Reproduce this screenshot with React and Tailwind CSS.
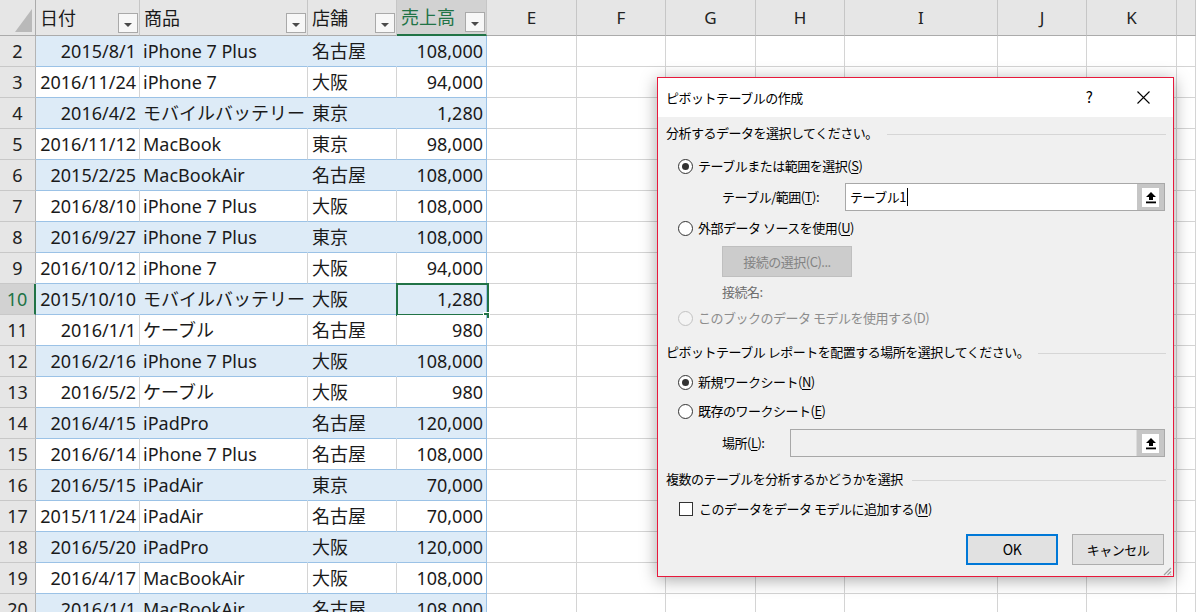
import React from "react";

const rows = [
  [2, "2015/8/1", "iPhone 7 Plus", "名古屋", "108,000"],
  [3, "2016/11/24", "iPhone 7", "大阪", "94,000"],
  [4, "2016/4/2", "モバイルバッテリー", "東京", "1,280"],
  [5, "2016/11/12", "MacBook", "東京", "98,000"],
  [6, "2015/2/25", "MacBookAir", "名古屋", "108,000"],
  [7, "2016/8/10", "iPhone 7 Plus", "大阪", "108,000"],
  [8, "2016/9/27", "iPhone 7 Plus", "東京", "108,000"],
  [9, "2016/10/12", "iPhone 7", "大阪", "94,000"],
  [10, "2015/10/10", "モバイルバッテリー", "大阪", "1,280"],
  [11, "2016/1/1", "ケーブル", "名古屋", "980"],
  [12, "2016/2/16", "iPhone 7 Plus", "大阪", "108,000"],
  [13, "2016/5/2", "ケーブル", "大阪", "980"],
  [14, "2016/4/15", "iPadPro", "名古屋", "120,000"],
  [15, "2016/6/14", "iPhone 7 Plus", "名古屋", "108,000"],
  [16, "2016/5/15", "iPadAir", "東京", "70,000"],
  [17, "2015/11/24", "iPadAir", "名古屋", "70,000"],
  [18, "2016/5/20", "iPadPro", "大阪", "120,000"],
  [19, "2016/4/17", "MacBookAir", "大阪", "108,000"],
  [20, "2016/1/1", "MacBookAir", "名古屋", "108,000"],
];

// empty columns E..L
const emptyCols = [
  ["E", "w-[90px]"],
  ["F", "w-[89px]"],
  ["G", "w-[90px]"],
  ["H", "w-[89px]"],
  ["I", "w-[153px]"],
  ["J", "w-[89px]"],
  ["K", "w-[90px]"],
  ["", "flex-1"],
];

function FilterBtn() {
  return (
    <div className="w-[20px] h-[20px] mb-[2px] shrink-0 border border-[#a9a9a9] bg-[#f7f7f7] flex items-center justify-center pt-[3px]">
      <svg width="8" height="4" viewBox="0 0 8 4">
        <path d="M0 0h8L4 4z" fill="#4a4a4a" />
      </svg>
    </div>
  );
}

function HeadCell({ w, label, active }) {
  return (
    <div
      className={`${w} h-[36px] flex items-end justify-between pl-[4px] pr-[1px] border-r border-[#c6c6c6] ${
        active ? "bg-[#d2d2d2] text-[#217346] border-b-2 border-b-[#217346]" : "bg-[#e6e6e6] border-b border-b-[#ababab]"
      }`}
    >
      <span className="leading-[26px] mb-[4px] whitespace-nowrap">{label}</span>
      <FilterBtn />
    </div>
  );
}

function HeaderRow() {
  return (
    <div className="flex h-[36px]">
      <div className="w-[36px] h-[36px] bg-[#e6e6e6] border-r border-b border-[#ababab] shrink-0">
        <svg width="35" height="35" viewBox="0 0 35 35">
          <polygon points="32,9 32,32 15,32" fill="#b9b9b9" />
        </svg>
      </div>
      <HeadCell w="w-[104px]" label="日付" />
      <HeadCell w="w-[168px]" label="商品" />
      <HeadCell w="w-[89px]" label="店舗" />
      <HeadCell w="w-[90px]" label="売上高" active />
      {emptyCols.map(([l, w], i) => (
        <div
          key={i}
          className={`${w} h-[36px] shrink-0 bg-[#e6e6e6] border-r border-r-[#c6c6c6] border-b border-b-[#ababab] flex items-center justify-center text-[17px] text-[#222]`}
        >
          {l}
        </div>
      ))}
    </div>
  );
}

function DataRow({ r }) {
  const [n, date, item, store, amt] = r;
  const band = n % 2 === 0;
  const sel = n === 10;
  const bg = band ? "bg-[#ddebf7]" : "bg-white";
  const vline = band ? "border-r-[#ddebf7]" : "border-r-[#d4d4d4]";
  const cell = `h-[31px] shrink-0 leading-[30px] whitespace-nowrap overflow-hidden border-r border-b border-b-[#9bc2e6] ${bg}`;
  return (
    <div className="flex h-[31px]">
      <div
        className={`w-[36px] h-[31px] shrink-0 flex items-center justify-center border-b border-b-[#c8c8c8] ${
          sel ? "bg-[#d2d2d2] text-[#217346] border-r-2 border-r-[#217346]" : "bg-[#e6e6e6] text-[#222] border-r border-r-[#b4b4b4]"
        }`}
      >
        {n}
      </div>
      <div className={`${cell} ${vline} w-[104px] text-right pr-[3px]`}>{date}</div>
      <div className={`${cell} ${vline} w-[168px] pl-[3px]`}>{item}</div>
      <div className={`${cell} ${vline} w-[89px] pl-[4px]`}>{store}</div>
      <div className={`${cell} border-r-[#9bc2e6] w-[90px] text-right pr-[3px] relative overflow-visible`}>
        {amt}
        {sel && (
          <>
            <div className="absolute -left-[1px] -top-[1px] w-[93px] h-[33px] border-2 border-[#217346]" />
            <div className="absolute left-[86px] top-[28px] w-[7px] h-[7px] bg-[#217346] border border-white" />
          </>
        )}
      </div>
      {emptyCols.map(([l, w], i) => (
        <div key={i} className={`${w} h-[31px] shrink-0 border-r border-b border-[#d4d4d4]`} />
      ))}
    </div>
  );
}

function Radio({ checked, disabled }) {
  return (
    <span
      className={`w-[15px] h-[15px] rounded-full border shrink-0 flex items-center justify-center ${
        disabled ? "border-[#c2c2c2] bg-[#f4f4f4]" : "border-[#333] bg-white"
      }`}
    >
      {checked && <span className="w-[7px] h-[7px] rounded-full bg-[#333]" />}
    </span>
  );
}

function Section({ children, className }) {
  return (
    <div className={`flex items-center h-[20px] pl-[8px] pr-[7px] ${className}`}>
      <span className="whitespace-nowrap">{children}</span>
      <span className="flex-1 h-px bg-[#d6d6d6] ml-[9px] mt-[3px]" />
    </div>
  );
}

function UploadBtn() {
  return (
    <div className="w-[27px] h-full bg-[#c6c6c6] flex items-center justify-center shrink-0">
      <div className="w-[17px] h-[19px] bg-white flex items-center justify-center">
        <svg width="12" height="13" viewBox="0 0 12 13">
          <polygon points="6,1 11,6 8,6 8,9 4,9 4,6 1,6" fill="#000" />
          <rect x="1" y="10.5" width="10" height="1.8" fill="#000" />
        </svg>
      </div>
    </div>
  );
}

function U({ children }) {
  return <span className="underline underline-offset-2">{children}</span>;
}

function Dialog() {
  return (
    <div className="absolute left-[657px] top-[77px] w-[517px] h-[500px] border border-[#e8193c] bg-[#f0f0f0] shadow-[0_3px_16px_rgba(0,0,0,0.35)] flex flex-col font-['Noto_Sans_CJK_JP',sans-serif] text-[13px] tracking-[-0.5px] text-black">
      <div className="h-[39px] bg-white flex items-center pl-[8px] shrink-0">
        <span>ピボットテーブルの作成</span>
        <span className="ml-auto w-[46px] text-center text-[15px]">?</span>
        <span className="w-[46px] ml-[8px] mr-[7px] flex items-center justify-center">
          <svg width="13" height="13" viewBox="0 0 13 13">
            <path d="M0.5 0.5L12.5 12.5M12.5 0.5L0.5 12.5" stroke="#000" strokeWidth="1.1" />
          </svg>
        </span>
      </div>

      <div className="flex-1 flex flex-col">
        <Section className="mt-[6px]">分析するデータを選択してください。</Section>

        <div className="mt-[13px] h-[20px] flex items-center pl-[20px] gap-[5px]">
          <Radio checked />
          <span>
            テーブルまたは範囲を選択(<U>S</U>)
          </span>
        </div>

        <div className="mt-[7px] h-[28px] flex items-center pl-[64px] pr-[8px]">
          <span className="w-[123px] shrink-0">
            テーブル/範囲(<U>T</U>):
          </span>
          <div className="flex-1 h-[28px] border border-[#a8a8a8] bg-white flex items-stretch">
            <div className="flex-1 flex items-center pl-[4px]">
              <span>テーブル1</span>
              <span className="w-px h-[18px] bg-black ml-px" />
            </div>
            <UploadBtn />
          </div>
        </div>

        <div className="mt-[7px] h-[20px] flex items-center pl-[20px] gap-[5px]">
          <Radio />
          <span>
            外部データ ソースを使用(<U>U</U>)
          </span>
        </div>

        <div className="mt-[8px] pl-[64px]">
          <div className="w-[130px] h-[31px] bg-[#cccccc] border border-[#bfbfbf] flex items-center justify-center text-[#838383]">
            接続の選択(C)...
          </div>
        </div>

        <div className="mt-[5px] h-[20px] flex items-center pl-[64px] text-[#6d6d6d]">接続名:</div>

        <div className="mt-[6px] h-[20px] flex items-center pl-[20px] gap-[5px] text-[#8d8d8d]">
          <Radio disabled />
          <span>このブックのデータ モデルを使用する(D)</span>
        </div>

        <Section className="mt-[14px]">ピボットテーブル レポートを配置する場所を選択してください。</Section>

        <div className="mt-[10px] h-[20px] flex items-center pl-[20px] gap-[5px]">
          <Radio checked />
          <span>
            新規ワークシート(<U>N</U>)
          </span>
        </div>

        <div className="mt-[9px] h-[20px] flex items-center pl-[20px] gap-[5px]">
          <Radio />
          <span>
            既存のワークシート(<U>E</U>)
          </span>
        </div>

        <div className="mt-[8px] h-[28px] flex items-center pl-[64px] pr-[8px]">
          <span className="w-[68px] shrink-0">
            場所(<U>L</U>):
          </span>
          <div className="flex-1 h-[28px] border border-[#a8a8a8] bg-[#f0f0f0] flex items-stretch">
            <div className="flex-1 border-r border-[#dcdcdc]" />
            <UploadBtn />
          </div>
        </div>

        <Section className="mt-[12px]">複数のテーブルを分析するかどうかを選択</Section>

        <div className="mt-[10px] h-[20px] flex items-center pl-[21px] gap-[6px]">
          <span className="w-[14px] h-[14px] border border-[#333] bg-white shrink-0" />
          <span>
            このデータをデータ モデルに追加する(<U>M</U>)
          </span>
        </div>

        <div className="mt-[15px] flex justify-end gap-[14px] pr-[9px]">
          <div className="w-[92px] h-[31px] border-2 border-[#0078d7] bg-[#e1e1e1] flex items-center justify-center text-[14px]">
            OK
          </div>
          <div className="w-[92px] h-[31px] border border-[#adadad] bg-[#e1e1e1] flex items-center justify-center">
            キャンセル
          </div>
        </div>

        <div className="mt-auto flex justify-end pr-[1px] pb-[1px]">
          <svg width="11" height="11" viewBox="0 0 11 11">
            <path d="M10 3L3 10M10 6.5L6.5 10M10 9.5L9.5 10" stroke="#a0a0a0" strokeWidth="1.2" />
          </svg>
        </div>
      </div>
    </div>
  );
}

export default function App() {
  return (
    <div className="relative w-[1196px] h-[612px] overflow-hidden bg-white font-['Noto_Sans','Noto_Sans_CJK_JP',sans-serif] text-[18px] text-[#1a1a1a]">
      <HeaderRow />
      {rows.map((r) => (
        <DataRow key={r[0]} r={r} />
      ))}
      <Dialog />
    </div>
  );
}
